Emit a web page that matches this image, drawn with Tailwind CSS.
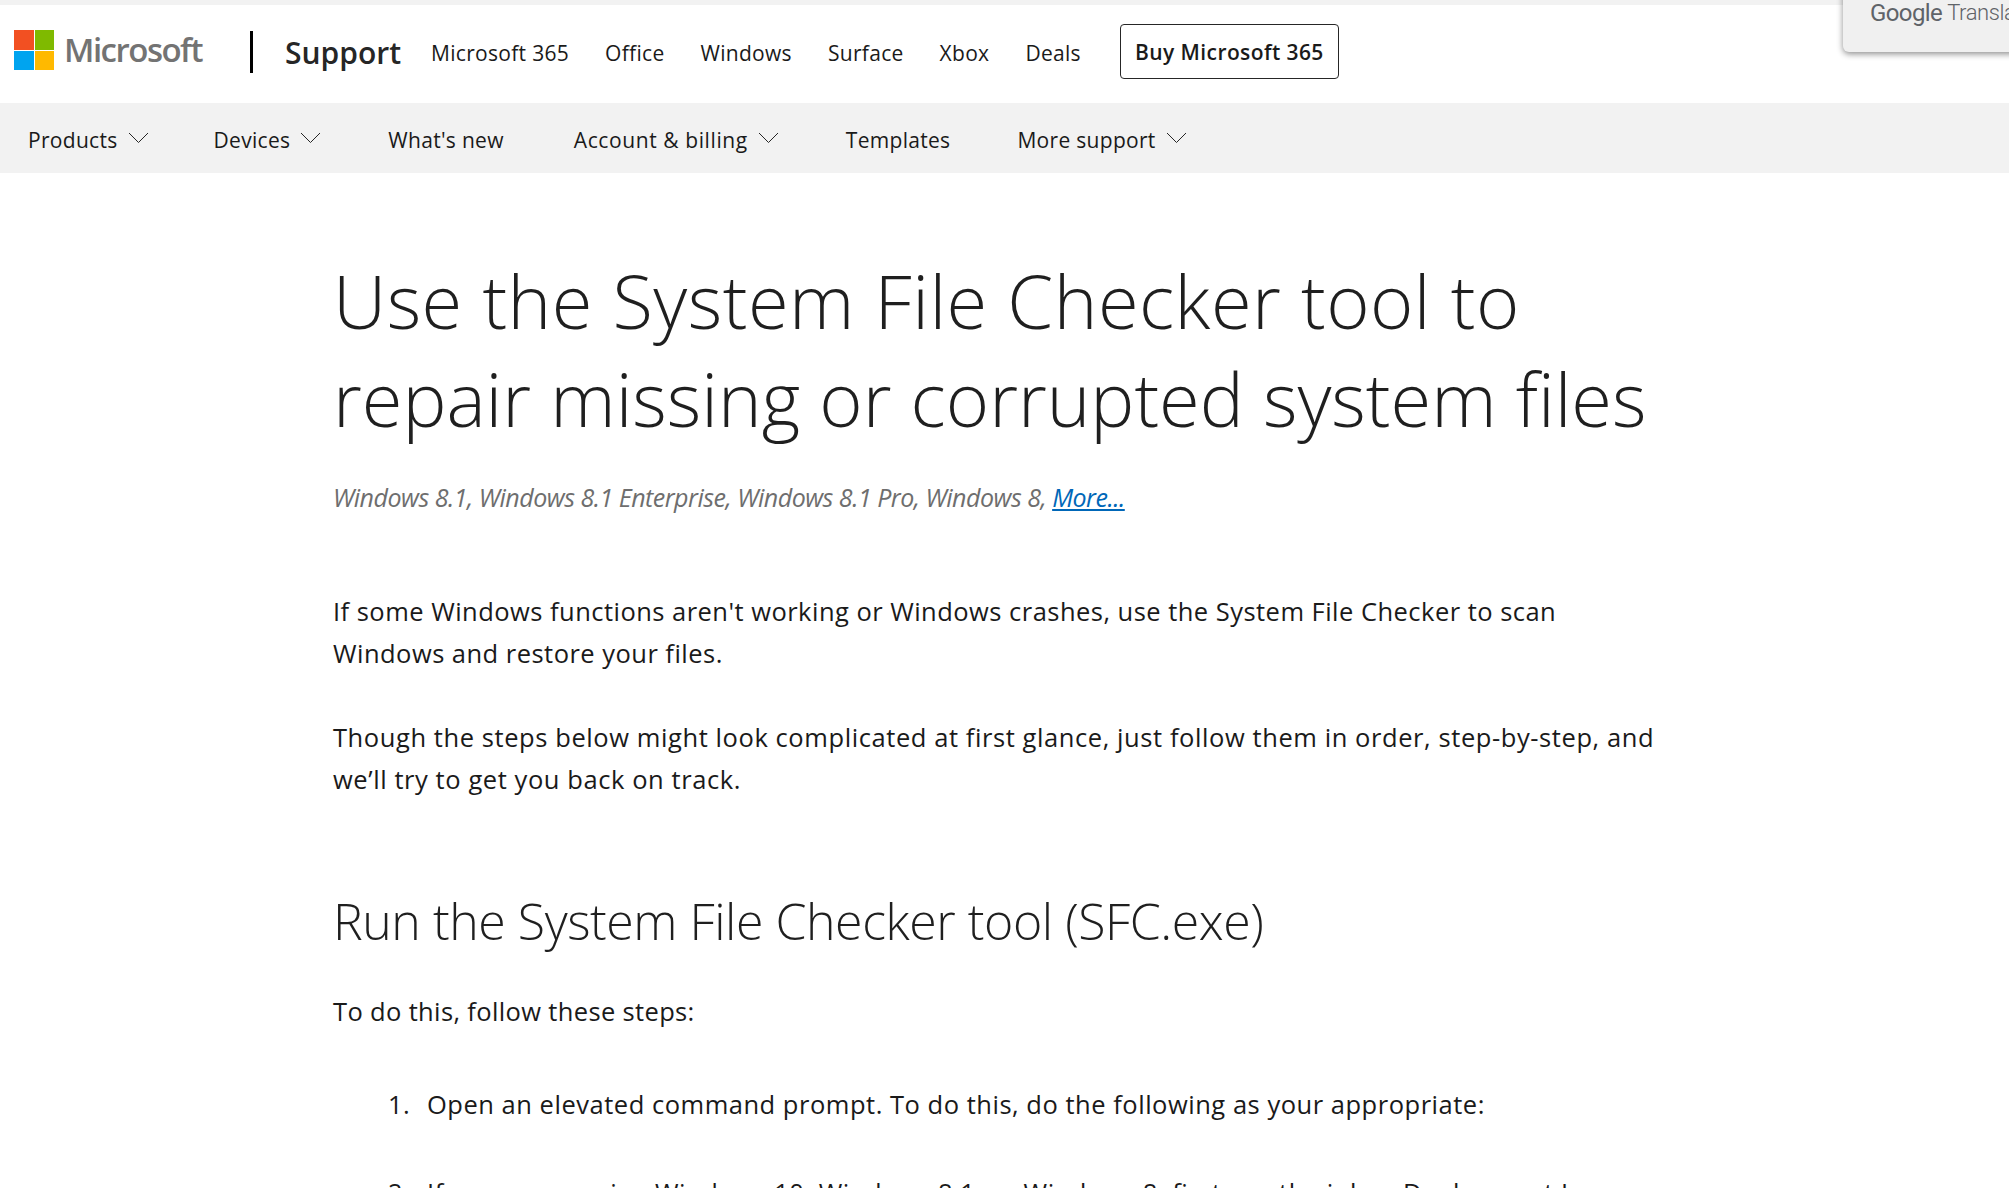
<!DOCTYPE html>
<html lang="en">
<head>
  <meta charset="UTF-8">
  <title>Use the System File Checker tool to repair missing or corrupted system files</title>
  <script src="https://cdn.jsdelivr.net/npm/@tailwindcss/browser@4"></script>
</head>
<body class="relative h-[1188px] overflow-hidden bg-white font-['Open_Sans','Noto_Sans',sans-serif] text-[#1a1a1a]">

  <!-- top strip -->
  <div class="h-[5px] bg-[#f2f2f2]"></div>

  <!-- header -->
  <header class="flex h-[98px] items-center">
    <div class="mb-[8px] ml-[14px] grid h-[40px] w-[40px] shrink-0 grid-cols-2 gap-[1px]">
      <span class="bg-[#f25022]"></span>
      <span class="bg-[#7fba00]"></span>
      <span class="bg-[#00a4ef]"></span>
      <span class="bg-[#ffb900]"></span>
    </div>
    <span class="mb-[8px] ml-[10px] w-[140px] text-[33px] font-semibold tracking-[-1.5px] text-[#737373]">Microsoft</span>
    <span class="mb-[4px] ml-[46px] h-[42px] w-[3px] bg-black"></span>
    <span class="mb-[3px] ml-[32px] text-[30px] font-semibold tracking-[0px] text-[#262626]">Support</span>
    <nav class="ml-[30px] flex items-center gap-[36px] text-[21px] tracking-[0.3px]">
      <a>Microsoft 365</a>
      <a>Office</a>
      <a>Windows</a>
      <a>Surface</a>
      <a>Xbox</a>
      <a>Deals</a>
    </nav>
    <a class="mb-[5px] ml-[39px] flex h-[55px] w-[219px] items-center justify-center rounded-[4px] border border-[#262626] pt-[2px] text-[21px] font-semibold tracking-[0.4px]">Buy Microsoft 365</a>
  </header>

  <!-- category nav -->
  <nav class="flex h-[70px] items-center bg-[#f2f2f2] pt-[5px] pl-[28px] text-[21px] tracking-[0.3px]">
    <a class="flex items-center gap-[10px]">Products
      <svg class="mb-[6px] h-[11px] w-[21px]" viewBox="0 0 21 11" fill="none" stroke="#262626" stroke-width="1"><path d="M1 1l9.500 9.500L20 1"/></svg>
    </a>
    <a class="ml-[65px] flex items-center gap-[10px]">Devices
      <svg class="mb-[6px] h-[11px] w-[21px]" viewBox="0 0 21 11" fill="none" stroke="#262626" stroke-width="1"><path d="M1 1l9.500 9.500L20 1"/></svg>
    </a>
    <a class="ml-[67px]">What's new</a>
    <a class="ml-[70px] flex items-center gap-[10px] tracking-[0.6px]">Account &amp; billing
      <svg class="mb-[6px] h-[11px] w-[21px]" viewBox="0 0 21 11" fill="none" stroke="#262626" stroke-width="1"><path d="M1 1l9.500 9.500L20 1"/></svg>
    </a>
    <a class="ml-[67px]">Templates</a>
    <a class="ml-[67px] flex items-center gap-[10px]">More support
      <svg class="mb-[6px] h-[11px] w-[21px]" viewBox="0 0 21 11" fill="none" stroke="#262626" stroke-width="1"><path d="M1 1l9.500 9.500L20 1"/></svg>
    </a>
  </nav>

  <!-- article -->
  <main class="ml-[333px] w-[1340px]">
    <h1 class="mt-[79px] text-[74px] leading-[98px] font-light text-[#1f1f1f]"><span class="tracking-[0.46px]">Use the System File Checker tool to</span><br><span class="tracking-[-0.02px]">repair missing or corrupted system files</span></h1>
    <p class="mt-[28px] text-[25px] leading-[42px] tracking-[-0.5px] text-[#6e6e6e] italic">Windows 8.1, Windows 8.1 Enterprise, Windows 8.1 Pro, Windows 8, <a class="text-[#0067b8] underline">More...</a></p>
    <p class="mt-[72px] text-[25.5px] leading-[42px] tracking-[0.47px]">If some Windows functions aren't working or Windows crashes, use the System File Checker to scan<br>Windows and restore your files.</p>
    <p class="mt-[42px] text-[25.5px] leading-[42px] tracking-[0.58px]">Though the steps below might look complicated at first glance, just follow them in order, step-by-step, and<br>we’ll try to get you back on track.</p>
    <h2 class="mt-[88px] text-[50px] leading-[66px] font-light tracking-[-0.45px] text-[#1f1f1f]">Run the System File Checker tool (SFC.exe)</h2>
    <p class="mt-[36px] text-[25.5px] leading-[42px] tracking-[0.35px]">To do this, follow these steps:</p>
    <ol class="mt-[51px] text-[25.5px] leading-[42px] tracking-[0.52px]">
      <li class="flex"><span class="w-[94px] pl-[55px]">1.</span><span>Open an elevated command prompt. To do this, do the following as your appropriate:</span></li>
      <li class="mt-[46px] flex"><span class="w-[94px] pl-[55px]">2.</span><span>If you are running Windows 10, Windows 8.1, or Windows 8, first run the inbox Deployment Image</span></li>
    </ol>
  </main>

  <!-- translate popup sits over the page corner -->
  <div class="absolute top-[-20px] left-[1843px] flex h-[72px] w-[200px] items-start rounded-[6px] bg-[#f0f0f0] pt-[20px] pl-[27px] text-[24px] leading-[26px] text-[#5f6368] shadow-[0_2px_6px_rgba(0,0,0,0.45)]">
    <span class="font-['Roboto',sans-serif] tracking-[-0.6px]">Google</span><span class="ml-[5px] font-['Roboto',sans-serif] text-[22px] font-light tracking-[-0.4px]">Translate</span>
  </div>
</body>
</html>
